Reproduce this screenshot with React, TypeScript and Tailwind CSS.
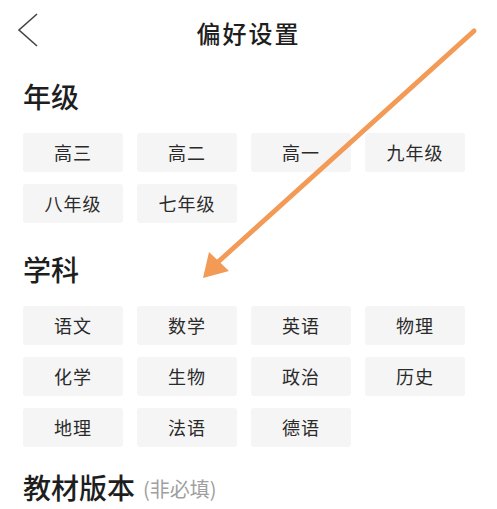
import React from "react";

const grades = ["高三", "高二", "高一", "九年级", "八年级", "七年级"];
const subjects = ["语文", "数学", "英语", "物理", "化学", "生物", "政治", "历史", "地理", "法语", "德语"];

function Chip({ label }: { label: string }) {
  return (
    <div className="h-[39px] rounded-[3px] bg-[#f5f5f5] flex items-center justify-center text-[18px] tracking-[1px] text-[#2a2a2a]">
      {label}
    </div>
  );
}

export default function App() {
  return (
    <div
      className="relative w-[497px] h-[509px] overflow-hidden bg-white text-[#222]"
      style={{ fontFamily: '"Noto Sans CJK SC", "Noto Sans", sans-serif' }}
    >
      {/* Header */}
      <div className="grid grid-cols-[1fr_auto_1fr] items-center h-[66px] px-[16px]">
        <svg width="24" height="36" viewBox="0 0 24 36" className="mt-[-4px]">
          <path d="M21 1 L3 17 L21 33" fill="none" stroke="#444" strokeWidth="1.6" />
        </svg>
        <div className="text-[24px] font-medium tracking-[2px] text-[#1e1e1e]">偏好设置</div>
        <div />
      </div>

      <div className="px-[23px]">
        {/* Grade */}
        <div className="mt-[10px] h-[40px] flex items-center text-[28px] font-medium text-[#1e1e1e]">年级</div>
        <div className="mt-[17px] grid grid-cols-4 gap-x-[14px] gap-y-[12px] w-[442px]">
          {grades.map((g) => (
            <Chip key={g} label={g} />
          ))}
        </div>

        {/* Subject */}
        <div className="mt-[26px] h-[40px] flex items-center text-[28px] font-medium text-[#1e1e1e]">学科</div>
        <div className="mt-[17px] grid grid-cols-4 gap-x-[14px] gap-y-[12px] w-[442px]">
          {subjects.map((s) => (
            <Chip key={s} label={s} />
          ))}
        </div>

        {/* Textbook */}
        <div className="mt-[24px] h-[32px] flex items-center gap-[8px]">
          <span className="text-[28px] font-medium text-[#1e1e1e] leading-[32px]">教材版本</span>
          <span className="text-[20px] text-[#a0a0a0] leading-[24px] mt-[4px]">(非必填)</span>
        </div>
      </div>

      {/* Annotation arrow */}
      <svg className="absolute left-0 top-0 pointer-events-none" width="497" height="509" viewBox="0 0 497 509">
        <line x1="474" y1="31" x2="218" y2="262" stroke="#f29a56" strokeWidth="5" strokeLinecap="round" />
        <polygon points="203,278 209,252 229,271" fill="#f29a56" />
      </svg>
    </div>
  );
}
